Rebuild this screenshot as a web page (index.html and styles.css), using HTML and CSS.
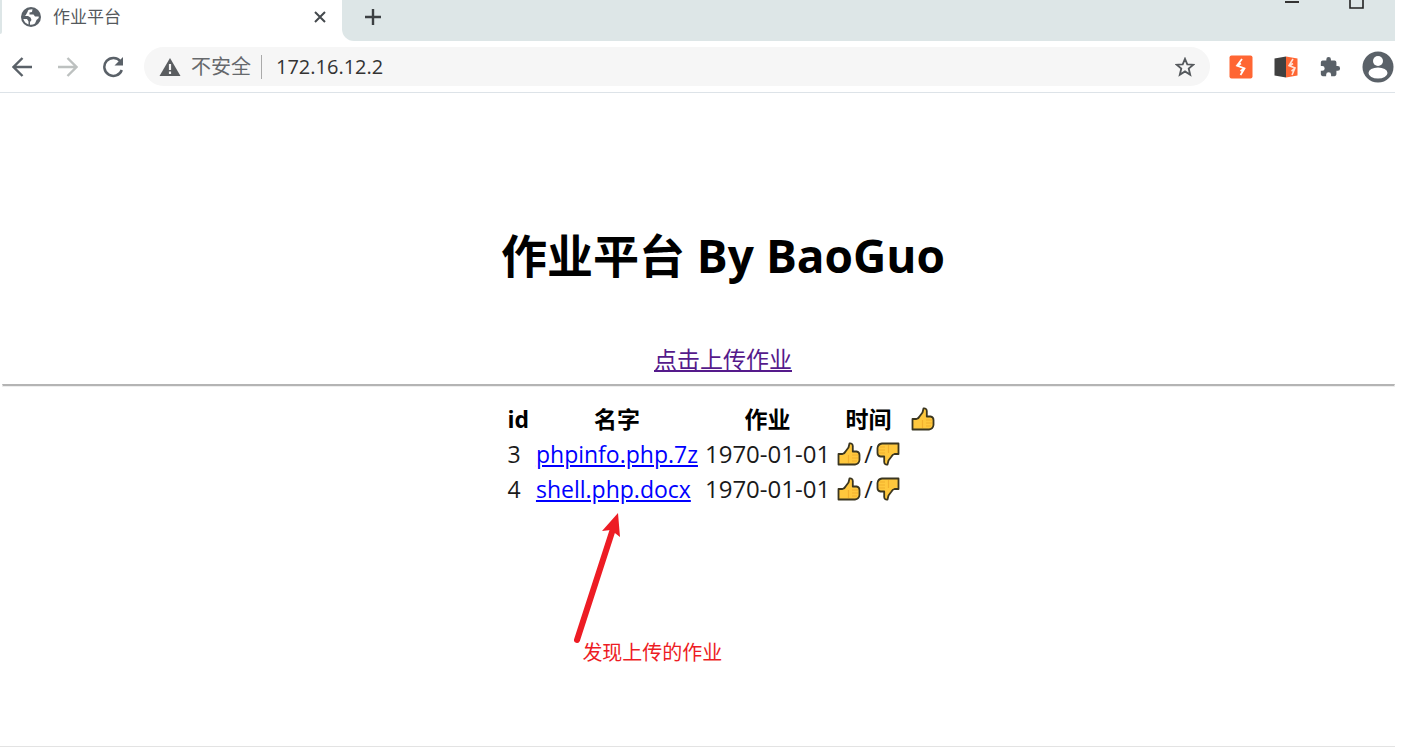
FILE: index.html
```html
<!doctype html>
<html lang="zh-CN">
  <head>
    <meta charset="UTF-8" />
    <meta name="viewport" content="width=device-width, initial-scale=1.0" />
    <title>作业平台</title>
    <link rel="stylesheet" href="styles.css">
  </head>
  <body>
    <svg class="symbols" aria-hidden="true">
      <symbol id="thumb" viewBox="0 0 24 24">
        <path d="M1.500 12H5.500Q7.500 11.500 8.500 9.500L11.500 5.500L12.500 1.500Q15.500 1 15.800 4V9.500H19.500Q22.500 10 22.500 13V18Q22 22 18 22.500H1.500Z" fill="#ffc83d" stroke="#3b3620" stroke-width="1.800" stroke-linejoin="round" />
        <path d="M11.500 13V21M15 13H21M15 16H21M15 19H20" fill="none" stroke="#f2b02e" stroke-width="1.200" />
      </symbol>
    </svg>

    <div class="browser">
      <header class="tabs">
        <div class="tab-edge"></div>
        <div class="tab">
          <svg class="favicon" viewBox="0 0 20 20">
            <circle cx="10" cy="10" r="10" fill="#5a6168" />
            <path d="M11.500 2.200Q4 2 2.300 9H7L9.500 10.500L10.500 13L9 15V17.800Q12 18 14 16.500L15.500 13L17.700 11V9.500L14 9.500L12.500 7.500H8.500L8.500 5.500L11 5Z" fill="#fff" />
            <path d="M2.300 9.500Q1.500 7 4.500 4L7.500 2.500L6.500 5L4.500 8.500Z" fill="#5a6168" />
            <path d="M2.300 12H6L7.500 14.500V17.500Q3.500 16 2.300 12Z" fill="#fff" />
          </svg>
          <span class="tab-title">作业平台</span>
          <button class="icon-btn close" aria-label="关闭">
            <svg width="12" height="12" viewBox="0 0 12 12"><path d="M1 1L11 11M11 1L1 11" stroke="#44494d" stroke-width="2" /></svg>
          </button>
        </div>
        <div class="strip">
          <button class="icon-btn" aria-label="新标签页">
            <svg width="18" height="18" viewBox="0 0 18 18"><path d="M9 1V17M1 9H17" stroke="#3c4043" stroke-width="2.4" /></svg>
          </button>
          <div class="window-btns">
            <button class="icon-btn" aria-label="最小化">
              <svg width="14" height="16" viewBox="0 0 14 16"><path d="M0 9H14" stroke="#333" stroke-width="2" /></svg>
            </button>
            <button class="icon-btn" aria-label="最大化">
              <svg width="15" height="16" viewBox="0 0 15 16"><path d="M1 1H14V15H1Z" fill="none" stroke="#222" stroke-width="1.6" /></svg>
            </button>
          </div>
        </div>
      </header>

      <nav class="toolbar">
        <button class="icon-btn" aria-label="后退">
          <svg width="20" height="20" viewBox="0 0 20 20"><path d="M20 10H2M10.500 1L1.500 10L10.500 19" fill="none" stroke="#5a6168" stroke-width="2.4" /></svg>
        </button>
        <button class="icon-btn forward" aria-label="前进">
          <svg width="20" height="20" viewBox="0 0 20 20"><path d="M0 10H18M9.500 1L18.500 10L9.500 19" fill="none" stroke="#bdc1c0" stroke-width="2.4" /></svg>
        </button>
        <button class="icon-btn reload" aria-label="重新加载">
          <svg width="22" height="22" viewBox="0 0 22 22">
            <path d="M18.500 5.500A9 9 0 1 0 19.800 14" fill="none" stroke="#5a6168" stroke-width="2.5" />
            <path d="M21 1V9.500H12.500Z" fill="#5a6168" />
          </svg>
        </button>
        <div class="address">
          <svg width="22" height="20" viewBox="0 0 22 20">
            <path d="M11 1L21.500 19H0.500Z" fill="#5a5d60" />
            <path d="M11 7V13M11 14.500V17" stroke="#f6f6f6" stroke-width="2.2" />
          </svg>
          <span class="insecure">不安全</span>
          <input class="url" type="text" value="172.16.12.2" aria-label="地址">
          <button class="icon-btn" aria-label="收藏">
            <svg width="20" height="20" viewBox="0 0 20 20"><path d="M10 1.800L12.300 7.300L18.300 7.700L13.700 11.500L15.200 17.800L10 14.400L4.800 17.800L6.300 11.500L1.700 7.700L7.700 7.300Z" fill="none" stroke="#55595d" stroke-width="1.800" /></svg>
          </button>
        </div>
        <div class="extensions">
          <button class="icon-btn" aria-label="Burp">
            <svg width="24" height="24" viewBox="0 0 24 24">
              <rect x="0.500" y="0.500" width="23" height="23" rx="2" fill="#ff6633" />
              <path d="M13 4L8 10.500L15.500 13.500L11.500 20M12 8.500L7.500 11M11.500 16L16 13" fill="none" stroke="#fff" stroke-width="1.800" />
            </svg>
          </button>
          <button class="icon-btn" aria-label="Proxy">
            <svg width="24" height="24" viewBox="0 0 24 24">
              <path d="M0.500 3.500L12 1.500V22.500L0.500 20.500Z" fill="#404040" />
              <path d="M12 1.500L23.500 3.500V20.500L12 22.500Z" fill="#ff6633" />
              <path d="M19 4L15 10.500L21 13L18 20M15 11L19 8.500M17.500 16L21 13.500" fill="none" stroke="#ffe3d8" stroke-width="1.600" />
            </svg>
          </button>
          <button class="icon-btn" aria-label="扩展程序">
            <svg width="22" height="22" viewBox="0 0 24 24"><path d="M20.500 11H19V7a2 2 0 0 0-2-2h-4V3.500a2.500 2.500 0 0 0-5 0V5H4a2 2 0 0 0-2 2v3.800h1.500a2.700 2.700 0 0 1 0 5.400H2V20a2 2 0 0 0 2 2h3.800v-1.500a2.700 2.700 0 0 1 5.400 0V22H17a2 2 0 0 0 2-2v-4h1.500a2.500 2.500 0 0 0 0-5z" fill="#5a6168" /></svg>
          </button>
          <button class="icon-btn" aria-label="用户">
            <svg width="32" height="32" viewBox="0 0 32 32">
              <circle cx="16" cy="16" r="15.500" fill="#5a6168" />
              <circle cx="16" cy="10" r="5" fill="#fff" />
              <ellipse cx="16" cy="22" rx="9.500" ry="5.500" fill="#fff" />
            </svg>
          </button>
        </div>
      </nav>

      <main class="page">
        <h1>作业平台 By BaoGuo</h1>
        <a class="upload" href="#">点击上传作业</a>
        <hr>
        <div class="list">
          <table>
            <thead>
              <tr>
                <th>id</th>
                <th>名字</th>
                <th>作业</th>
                <th>时间</th>
                <th><svg class="thumb" role="img" aria-label="赞"><use href="#thumb" /></svg></th>
              </tr>
            </thead>
            <tbody>
              <tr>
                <td>3</td>
                <td><a href="#">phpinfo.php.7z</a></td>
                <td class="date">1970-01-01</td>
                <td><div class="votes"><svg class="thumb"><use href="#thumb" /></svg>/<svg class="thumb down"><use href="#thumb" /></svg></div></td>
              </tr>
              <tr>
                <td>4</td>
                <td><a href="#">shell.php.docx</a></td>
                <td class="date">1970-01-01</td>
                <td><div class="votes"><svg class="thumb"><use href="#thumb" /></svg>/<svg class="thumb down"><use href="#thumb" /></svg></div></td>
              </tr>
            </tbody>
          </table>
          <div class="note">
            <svg class="arrow" width="50" height="132" viewBox="0 0 50 132">
              <path d="M5 127L41 16" stroke="#ed1c24" stroke-width="6" stroke-linecap="round" />
              <path d="M46 0L48 24L39 17L30 18Z" fill="#ed1c24" />
            </svg>
            <span>发现上传的作业</span>
          </div>
        </div>
      </main>
    </div>
  </body>
</html>
```
FILE: styles.css
```css
body {
  margin: 0;
  height: 100vh;
  background: #fff;
  color: #000;
  font-family: "Open Sans", "Noto Sans CJK SC", sans-serif;
  overflow: hidden;
}

.symbols {
  position: absolute;
  width: 0;
  height: 0;
}

.browser {
  box-sizing: border-box;
  display: flex;
  flex-direction: column;
  height: calc(100vh - 5px);
  margin-right: 28px;
  border-bottom: 1px solid #e3e3e3;
}

.icon-btn {
  display: flex;
  padding: 0;
  border: 0;
  background: none;
}

/* tab strip */
.tabs {
  display: flex;
  height: 41px;
}

.tab-edge {
  width: 2px;
  height: 34px;
  background: #dde6e7;
  border-bottom-right-radius: 2px;
}

.tab {
  box-sizing: border-box;
  display: flex;
  align-items: center;
  width: 340px;
  height: 34px;
  padding: 0 16px 0 19px;
}

.favicon {
  width: 20px;
  height: 20px;
}

.tab-title {
  margin-left: 12px;
  color: #55595d;
  font-size: 17px;
  line-height: 24px;
}

.close {
  margin-left: auto;
}

.strip {
  flex: 1;
  display: flex;
  justify-content: space-between;
  align-items: flex-start;
  padding: 8px 31px 0 22px;
  background: #dde6e7;
  border-bottom-left-radius: 12px;
}

.window-btns {
  display: flex;
  gap: 50px;
  margin-top: -15px;
}

/* toolbar */
.toolbar {
  display: flex;
  align-items: center;
  height: 51px;
  padding-left: 12px;
  border-bottom: 1px solid #dde3e8;
}

.forward {
  margin-left: 26px;
}

.reload {
  margin: 0 20px 0 24px;
}

.address {
  flex: 1;
  display: flex;
  align-items: center;
  height: 39px;
  padding: 0 15px;
  background: #f6f6f6;
  border-radius: 20px;
}

.insecure {
  margin-left: 10px;
  padding-right: 10px;
  border-right: 1px solid #aaa;
  color: #66696c;
  font-size: 20px;
  line-height: 24px;
}

.url {
  flex: 1;
  padding: 0 0 0 14px;
  border: 0;
  background: none;
  color: #333;
  font: 20px/28px "Open Sans", sans-serif;
}

.extensions {
  display: flex;
  align-items: center;
  gap: 21px;
  margin: 0 1px 0 19px;
}

/* the page is wider than the visible part of the window */
.page {
  flex: 1;
  display: flex;
  flex-direction: column;
  align-items: center;
  width: calc(100% + 47px);
  padding-left: 2px;
}

h1 {
  margin: 129px 0 55px;
  font-size: 46px;
  line-height: 66px;
}

.upload {
  color: #551a8b;
  font-size: 23px;
  line-height: 32px;
}

hr {
  align-self: flex-start;
  box-sizing: border-box;
  width: calc(100% - 49px);
  height: 3px;
  margin: 9px 0 13px;
  border: 1px solid #eee;
  border-top: 2px solid #b4b4b4;
}

.list {
  position: relative;
}

table {
  border-spacing: 3px;
  font-size: 23px;
  line-height: 28px;
}

th,
td {
  padding: 2px;
}

td {
  color: #1a1a1a;
}

td a {
  color: #00f;
}

.date {
  font-size: 24px;
}

.votes {
  display: flex;
  align-items: center;
  gap: 3px;
}

.thumb {
  display: block;
  width: 24px;
  height: 24px;
}

th .thumb {
  margin: 0 4px;
}

.down {
  transform: rotate(180deg);
}

.note {
  position: absolute;
  top: 113px;
  left: 70px;
  color: #ed1c24;
  font-size: 20px;
  line-height: 24px;
}

.note span {
  display: block;
  margin: -4px 0 0 10px;
  white-space: nowrap;
}

.arrow {
  display: block;
}
```
